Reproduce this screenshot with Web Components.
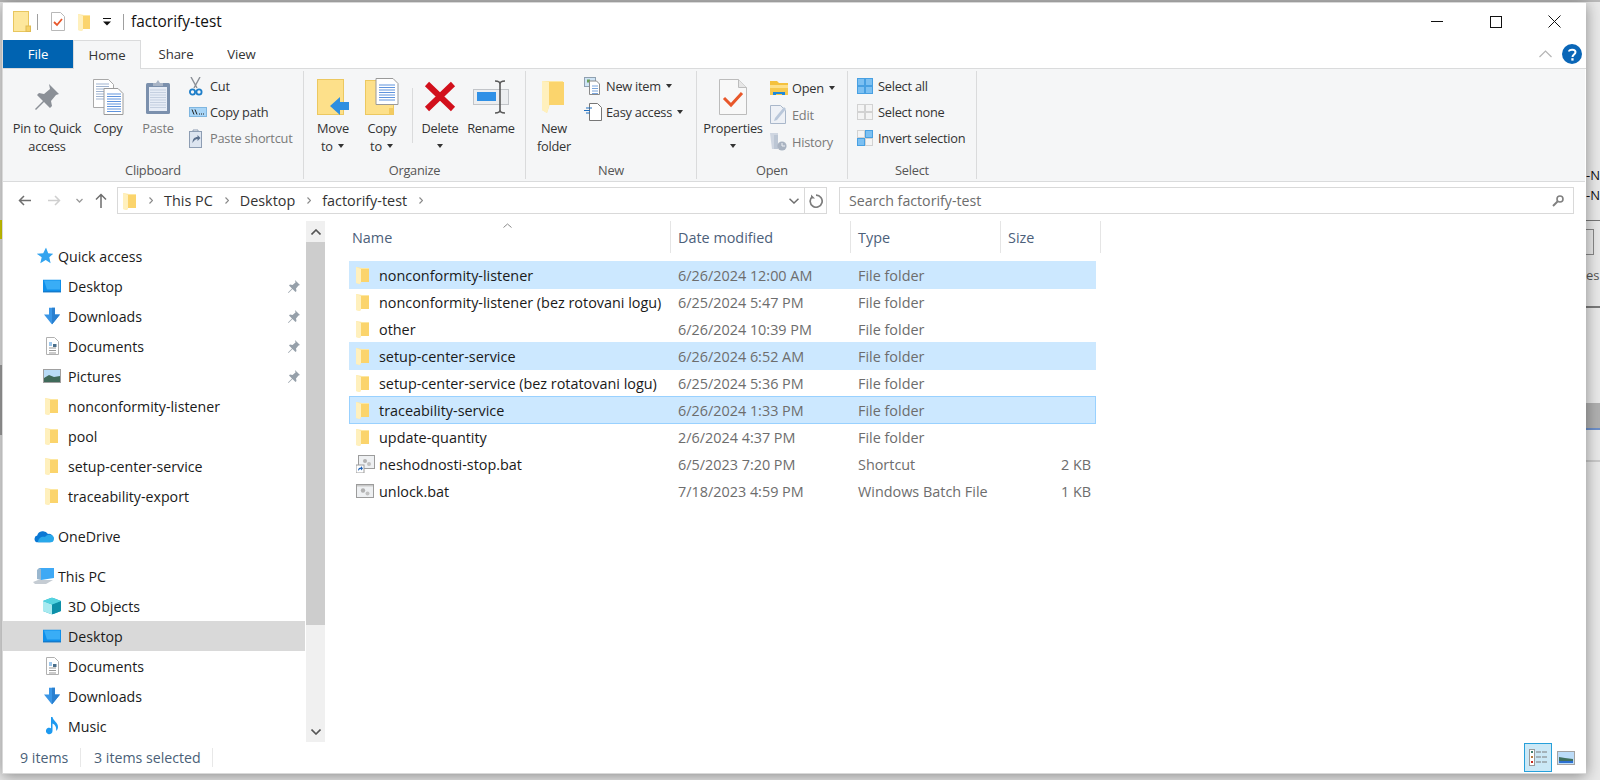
<!DOCTYPE html>
<html lang="en">
<head>
<meta charset="utf-8">
<title>factorify-test</title>
<style>
  html, body { margin: 0; height: 100%; overflow: hidden; }
  body { font: 14.4px "Open Sans", "Noto Sans", sans-serif; color: #1a1a1a; }
</style>
</head>
<body>
<desktop-bg>
  <explorer-window>
    <title-bar slot="top"></title-bar>
    <ribbon-tabs slot="top"></ribbon-tabs>
    <ribbon-bar slot="top">
      <ribbon-group label="Clipboard" width="300">
        <ribbon-button icon="pin" width="78" style="margin-left:5px">Pin to Quick<br>access</ribbon-button>
        <ribbon-button icon="copy" width="44">Copy</ribbon-button>
        <ribbon-button icon="paste" width="56" disabled>Paste</ribbon-button>
        <ribbon-stack style="margin-left:3px">
          <ribbon-small icon="cut" box="21">Cut</ribbon-small>
          <ribbon-small icon="copypath" box="21">Copy path</ribbon-small>
          <ribbon-small icon="pasteshort" box="21" disabled>Paste shortcut</ribbon-small>
        </ribbon-stack>
      </ribbon-group>
      <ribbon-group label="Organize" width="221">
        <ribbon-button icon="moveto" width="52" style="margin-left:3px">Move<br>to <win-caret></win-caret></ribbon-button>
        <ribbon-button icon="copyto" width="46">Copy<br>to <win-caret></win-caret></ribbon-button>
        <ribbon-sep></ribbon-sep>
        <ribbon-button icon="delete" width="52">Delete<br><win-caret></win-caret></ribbon-button>
        <ribbon-button icon="rename" width="50">Rename</ribbon-button>
      </ribbon-group>
      <ribbon-group label="New" width="170">
        <ribbon-button icon="newfolder" width="50" style="margin-left:3px">New<br>folder</ribbon-button>
        <ribbon-stack style="margin-left:5px">
          <ribbon-small icon="newitem" box="22">New item <win-caret></win-caret></ribbon-small>
          <ribbon-small icon="easy" box="22">Easy access <win-caret></win-caret></ribbon-small>
        </ribbon-stack>
      </ribbon-group>
      <ribbon-group label="Open" width="150">
        <ribbon-button icon="props" width="66" style="margin-left:3px">Properties<br><win-caret></win-caret></ribbon-button>
        <ribbon-stack pitch="27" style="margin-left:4px">
          <ribbon-small icon="open" box="22">Open <win-caret></win-caret></ribbon-small>
          <ribbon-small icon="edit" box="22" disabled>Edit</ribbon-small>
          <ribbon-small icon="history" box="22" disabled>History</ribbon-small>
        </ribbon-stack>
      </ribbon-group>
      <ribbon-group label="Select" width="128">
        <ribbon-stack style="margin-left:9px">
          <ribbon-small icon="selall" box="21">Select all</ribbon-small>
          <ribbon-small icon="selnone" box="21">Select none</ribbon-small>
          <ribbon-small icon="selinv" box="21">Invert selection</ribbon-small>
        </ribbon-stack>
      </ribbon-group>
    </ribbon-bar>
    <address-row slot="top"></address-row>

    <nav-pane slot="nav">
      <nav-item icon="star" level="0">Quick access</nav-item>
      <nav-item icon="desktop" pinned>Desktop</nav-item>
      <nav-item icon="downloads" pinned>Downloads</nav-item>
      <nav-item icon="documents" pinned>Documents</nav-item>
      <nav-item icon="pictures" pinned>Pictures</nav-item>
      <nav-item icon="folder">nonconformity-listener</nav-item>
      <nav-item icon="folder">pool</nav-item>
      <nav-item icon="folder">setup-center-service</nav-item>
      <nav-item icon="folder">traceability-export</nav-item>
      <nav-item icon="onedrive" level="0" gap>OneDrive</nav-item>
      <nav-item icon="thispc" level="0" gap>This PC</nav-item>
      <nav-item icon="cube">3D Objects</nav-item>
      <nav-item icon="desktop" selected>Desktop</nav-item>
      <nav-item icon="documents">Documents</nav-item>
      <nav-item icon="downloads">Downloads</nav-item>
      <nav-item icon="music">Music</nav-item>
    </nav-pane>

    <file-list slot="list">
      <file-row icon="folder" selected date="6/26/2024 12:00 AM" type="File folder">nonconformity-listener</file-row>
      <file-row icon="folder" date="6/25/2024 5:47 PM" type="File folder">nonconformity-listener (bez rotovani logu)</file-row>
      <file-row icon="folder" date="6/26/2024 10:39 PM" type="File folder">other</file-row>
      <file-row icon="folder" selected date="6/26/2024 6:52 AM" type="File folder">setup-center-service</file-row>
      <file-row icon="folder" date="6/25/2024 5:36 PM" type="File folder">setup-center-service (bez rotatovani logu)</file-row>
      <file-row icon="folder" selected focused date="6/26/2024 1:33 PM" type="File folder">traceability-service</file-row>
      <file-row icon="folder" date="2/6/2024 4:37 PM" type="File folder">update-quantity</file-row>
      <file-row icon="shortcut" date="6/5/2023 7:20 PM" type="Shortcut" size="2 KB">neshodnosti-stop.bat</file-row>
      <file-row icon="bat" date="7/18/2023 4:59 PM" type="Windows Batch File" size="1 KB">unlock.bat</file-row>
    </file-list>

    <status-bar slot="bottom"></status-bar>
  </explorer-window>
</desktop-bg>

<script>
// every icon: [width, height, svg body]
const folderBody = `<path d="M1 1l6 1 7 0v14H6l-1 2-4-1z" fill="#fde7a0"/><path d="M6 3h8v13H6z" fill="#fbd46c"/><path d="M1 1l5 2v13l-1 2-4-1z" fill="#fff0bd"/>`
const docLines = (x, y, n, w, c) => Array.from({ length: n }, (_, i) => `<path d="M${x} ${y + i * 2.5}h${w}" stroke="${c}" stroke-width="1"/>`).join('')
const ICONS = {
  folder: [14, 18, folderBody],
  titlefolder: [18, 21, `<rect x=".5" y=".5" width="15" height="20" fill="#fde79c" stroke="#e8c65e"/><rect x="13" y="15" width="4.5" height="5.5" fill="#f6d26a" stroke="#e0bb52"/>`],
  titlecheck: [14, 19, `<path d="M.5.5h9l4 4v14H.5z" fill="#fff" stroke="#b8b8b8"/><path d="M3 10l3 3 5-6" fill="none" stroke="#e8572a" stroke-width="1.8"/>`],
  titlefolder2: [13, 18, folderBody],
  qdrop: [8, 8, `<path d="M0 .5h8" stroke="#111"/><path d="M0 3.5h8L4 7.5z" fill="#111"/>`],
  min: [12, 1, `<rect width="12" height="1" fill="#111"/>`],
  max: [12, 12, `<rect x=".5" y=".5" width="11" height="11" fill="none" stroke="#111"/>`],
  close: [13, 13, `<path d="M.5.5l12 12M12.5.5l-12 12" stroke="#111" fill="none"/>`],
  collapse: [13, 8, `<path d="M.5 7L6.5 1l6 6" fill="none" stroke="#b5b5b5" stroke-width="1.2"/>`],
  help: [20, 20, `<circle cx="10" cy="10" r="10" fill="#0a66b7"/><path d="M7 7.5C7 5 13.5 5 13.5 8c0 2.5-3 2.4-3 5" fill="none" stroke="#fff" stroke-width="2"/><rect x="9.3" y="14.2" width="2.3" height="2.4" fill="#fff"/>`],
  pin: [26, 28, `<path d="M15 1l10 10-3 1-5 6 1 5-2 2-6-6-8 8-1-1 8-8-6-6 2-2 5 1 6-5z" fill="#8b9097"/>`],
  pinsmall: [13, 13, `<path d="M8 0l5 5-1.5.6-2.5 3 .5 2.4-1 1-3-3-4 4-.5-.5 4-4-3-3 1-1 2.5.5 3-2.5z" fill="#96a0aa"/>`],
  copy: [31, 36, `<path d="M.5.5h15l5 5v23H.5z" fill="#fff" stroke="#a9a9a9"/>${docLines(3, 5, 7, 13, '#9fb3d0')}<path d="M11 9.5h14l5 5v21H11z" fill="#fff" stroke="#9a9a9a"/>${docLines(14, 15, 8, 14, '#5f93dd')}`],
  paste: [26, 36, `<rect x="1" y="4" width="24" height="31" rx="1.5" fill="#7b90ad"/><rect x="4" y="8" width="18" height="24" fill="#e6ecf6"/>${docLines(5, 11, 8, 16, '#c4cfe0')}<path d="M8 7V4h3l2-3 2 3h3v3z" fill="#a8b4c6"/>`],
  cut: [14, 19, `<path d="M2 0l6 11M11 0L5 11" stroke="#8a8f96" stroke-width="1.4" fill="none"/><circle cx="3.5" cy="15" r="2.6" fill="none" stroke="#1f7fc9" stroke-width="1.8"/><circle cx="10" cy="15" r="2.6" fill="none" stroke="#1f7fc9" stroke-width="1.8"/>`],
  copypath: [18, 10, `<rect x=".5" y=".5" width="17" height="9" fill="#a8d5f7" stroke="#7fb6e0"/><path d="M3 2.5l2 5M6 2.5l2 5" stroke="#222" fill="none"/><path d="M10 7h5" stroke="#222" stroke-dasharray="1 1"/>`],
  pasteshort: [13, 19, `<rect x=".5" y="2.5" width="12" height="16" fill="#dde5f0" stroke="#8d9db3"/><path d="M4 2.5V1h5v1.5" fill="none" stroke="#8d9db3"/><path d="M4 15c0-4 2-6 5-6V7l3 3-3 3v-2c-2 0-3 1-5 4z" fill="#5a6f8c" transform="translate(-.5 -1)"/>`],
  moveto: [33, 36, `<rect x=".5" y=".5" width="26" height="35" fill="#fde08a" stroke="#ecc860"/><path d="M13 27l10-9v5h9v8h-9v5z" fill="#2f8fe0"/>`],
  copyto: [34, 37, `<rect x=".5" y="2.5" width="28" height="34" fill="#fde08a" stroke="#ecc860"/><path d="M24 30h4.5v6.5H24z" fill="#f3cb62"/><path d="M11 .5h17l5 5v21H11z" fill="#fff" stroke="#9a9a9a"/>${docLines(14, 7, 7, 16, '#5f93dd')}`],
  delete: [32, 31, `<path d="M3 3l26 25M29 3L3 28" stroke="#d2101c" stroke-width="6" fill="none"/>`],
  rename: [36, 34, `<rect x=".5" y="9.5" width="35" height="15" fill="#eceef0" stroke="#c2c5c9"/><rect x="4" y="12" width="19" height="9" fill="#2f90e6"/><path d="M22 1c3 0 5 1 5 3v26c0 2-2 3-5 3M32 1c-3 0-5 1-5 3v26c0 2 2 3 5 3" fill="none" stroke="#5a5a5a" stroke-width="1.6"/>`],
  newfolder: [24, 34, `<path d="M0 1h21v23l-13 0-3 9-5-3z" fill="#fde7a0"/><path d="M7 2h15v23H7z" fill="#fbd46c"/><path d="M0 1l7 1v24l-2 7-5-3z" fill="#fff0bd"/>`],
  newitem: [18, 18, `<rect x=".5" y=".5" width="11" height="9" fill="#cfe4f5" stroke="#8fa0b0"/><rect x="3" y="2.5" width="3" height="3" fill="#6aa058"/><path d="M5.5 4h7l3 3v10.5h-10z" fill="#fff" stroke="#8a8a8a"/>${docLines(8, 9, 4, 6, '#7aa5dc')}`],
  easy: [18, 18, `<path d="M5.5.5h8l4 4v13h-12z" fill="#fff" stroke="#777"/><path d="M2 5h6M0 7.5h6M2 10h4" stroke="#1f6fc0" fill="none" stroke-width="1.2"/>`],
  props: [28, 36, `<path d="M.5.5h19l8 8v27H.5z" fill="#f8f8f8" stroke="#bcbcbc"/><path d="M19.5.5v8h8" fill="#e6e6e6" stroke="#bcbcbc"/><path d="M5 19l7 7 11-12" fill="none" stroke="#e8572a" stroke-width="3"/>`],
  open: [18, 16, `<path d="M0 1h7l2 2h9v12H0z" fill="#f4c13e"/><path d="M0 5h18v3H0z" fill="#fde08a"/><path d="M0 8h18v7H0z" fill="#f6c94f"/><path d="M3 15v-3h12v3h-3v-1H6v1z" fill="#1e88d9"/>`],
  edit: [16, 19, `<path d="M.5.5h10l5 5v13H.5z" fill="#eef1f6" stroke="#a9b7ca"/><path d="M5 13L14 2l2 2-9 11-3 1z" fill="#b9c7da"/>`],
  history: [17, 19, `<path d="M0 1h8v16H2z" fill="#cfd6e1"/><path d="M4 3h4v14H4z" fill="#bcc6d4"/><circle cx="12" cy="14" r="4.6" fill="#a9b3c1"/><path d="M12 11v3h3" stroke="#eef1f5" fill="none"/>`],
  selall: [16, 16, `<g fill="#7cc0f2" stroke="#48a0e2"><rect x=".5" y=".5" width="7" height="7"/><rect x="8.5" y=".5" width="7" height="7"/><rect x=".5" y="8.5" width="7" height="7"/><rect x="8.5" y="8.5" width="7" height="7"/></g>`],
  selnone: [16, 16, `<g fill="#f4f4f4" stroke="#d2d2d2"><rect x=".5" y=".5" width="7" height="7"/><rect x="8.5" y=".5" width="7" height="7"/><rect x=".5" y="8.5" width="7" height="7"/><rect x="8.5" y="8.5" width="7" height="7"/></g>`],
  selinv: [16, 16, `<g fill="#f4f4f4" stroke="#d2d2d2"><rect x=".5" y=".5" width="7" height="7"/><rect x="8.5" y="8.5" width="7" height="7"/></g><g fill="#7cc0f2" stroke="#48a0e2"><rect x="8.5" y=".5" width="7" height="7"/><rect x=".5" y="8.5" width="7" height="7"/></g>`],
  back: [13, 11, `<path d="M13 5.5H1.5M6 1L1.5 5.5 6 10" fill="none" stroke="#6e6e6e" stroke-width="1.5"/>`],
  forward: [13, 11, `<path d="M0 5.5h11.5M7 1l4.5 4.5L7 10" fill="none" stroke="#cfcfcf" stroke-width="1.5"/>`],
  recent: [7, 5, `<path d="M.5 1L3.5 4l3-3" fill="none" stroke="#9a9a9a" stroke-width="1.3"/>`],
  up: [12, 15, `<path d="M6 15V1.5M1 6.5l5-5 5 5" fill="none" stroke="#6e6e6e" stroke-width="1.5"/>`],
  crumb: [4, 7, `<path d="M.5.5l3 3-3 3" fill="none" stroke="#8a8a8a" stroke-width="1.2"/>`],
  addrdrop: [10, 6, `<path d="M.5.8L5 5l4.5-4.2" fill="none" stroke="#6e6e6e" stroke-width="1.5"/>`],
  refresh: [14, 14, `<path d="M3.3 2.6A6 6 0 1 0 7 1.2" fill="none" stroke="#7d7d7d" stroke-width="1.7"/><path d="M2 .5v4h4z" fill="#7d7d7d"/>`],
  search: [12, 12, `<circle cx="8" cy="4" r="3" fill="none" stroke="#808080" stroke-width="1.6"/><path d="M5.5 6.5L1 11" stroke="#808080" stroke-width="2"/>`],
  star: [18, 17, `<path d="M11 0l2.2 5.8 5 .4-3.9 3.6 1.3 6-4.9-3.2-5.4 3.2 1.4-6-5-3.6 6.5-.4z" fill="#33a4ef"/>`],
  desktop: [18, 13, `<rect width="18" height="13" fill="#0f8fea"/><path d="M1 1h16v9H4z" fill="#39adf6"/><rect y="12" width="18" height="1" fill="#1868b0"/>`],
  downloads: [16, 17, `<path d="M5 0h6v7h5l-8 10L0 7h5z" fill="#3a96e6"/><path d="M8 0h3v7h5l-8 10z" fill="#2a80d0"/>`],
  documents: [13, 18, `<path d="M.5.5h8l4 4v13H.5z" fill="#fff" stroke="#b0b0b0"/><path d="M3 6h3M3 8h3" stroke="#3f8fd8"/>${docLines(3, 11, 3, 7, '#999')}<rect x="7" y="7" width="3.5" height="3" fill="#4a6e8a"/>`],
  pictures: [18, 14, `<rect x=".5" y=".5" width="17" height="13" fill="#b9dcf7" stroke="#a0a0a0"/><path d="M1 9l5-3 5 2 6-1v6H1z" fill="#3f6a5a"/>`],
  onedrive: [20, 13, `<path d="M4 13a3.5 3.5 0 0 1-.8-6.9A6 6 0 0 1 14 4.5 4.3 4.3 0 0 1 16 13z" fill="#0a78d4"/><path d="M4 13h12a3.8 3.8 0 0 0 1-7.5c-3-1-5 .5-6 2-3-1-7 1-7 5.500z" fill="#28a8ea"/>`],
  thispc: [22, 16, `<path d="M6 0h15v10l-13 2z" fill="#3fa9f5"/><path d="M6 0l-2 2v9l4 1V1z" fill="#9ab7cf"/><path d="M0 14l5-2h15l-7 4H2z" fill="#c5ccd3"/>`],
  cube: [18, 17, `<path d="M9 0l9 3.500v10L9 17 0 13.500v-10z" fill="#1fb5c9"/><path d="M0 3.500L9 7v10L0 13.500z" fill="#a8eaf0"/><path d="M9 7l9-3.500v10L9 17z" fill="#0d8fa8"/><path d="M9 0l9 3.500L9 7 0 3.500z" fill="#55d3e0"/>`],
  music: [13, 18, `<path d="M5 0h1.500c.5 4 5.500 5 5.500 10 0 2-1 3-2 4 .5-3 0-6-3.500-7.500V14a3.300 3.300 0 1 1-1.500-2.800z" fill="#1e9af0"/>`],
  shortcut: [19, 18, `<rect x="2.500" y=".5" width="16" height="13" fill="#eef0f2" stroke="#9c9c9c"/><circle cx="9" cy="6" r="2" fill="#b0b0b0"/><circle cx="13" cy="9" r="2" fill="#c0c0c0"/><rect y="10" width="8" height="8" fill="#fff" stroke="#9c9c9c"/><path d="M2 16c0-2.500 1-3.500 3-3.500V11l2 2.500L5 15.500V14c-1.500 0-2 .7-3 2z" fill="#1b5fb5"/>`],
  bat: [18, 14, `<rect x=".5" y=".5" width="17" height="13" fill="#eef0f2" stroke="#9c9c9c"/><rect x="1" y="1" width="16" height="1.500" fill="#c9c9c9"/><circle cx="7" cy="6.500" r="2.200" fill="#b0b0b0"/><circle cx="11.500" cy="9.500" r="2" fill="#c0c0c0"/>`],
  viewdetails: [18, 17, `<rect x=".5" y=".5" width="5" height="16" fill="#fff" stroke="#9a9a9a"/><rect x="2" y="2" width="2" height="2" fill="#3f7f70"/><rect x="2" y="7" width="2" height="2" fill="#b37a3f"/><rect x="2" y="12" width="2" height="2" fill="#c8281e"/><path d="M7 3h5M13 3h5M7 8h5M13 8h5M7 13h5M13 13h5" stroke="#7d7d7d"/>`],
  viewthumbs: [18, 14, `<rect x=".5" y=".5" width="17" height="13" fill="#bcdcf8" stroke="#a3a3a3"/><path d="M2 6l6 1 8 1v4H2z" fill="#40705e"/><rect x="2" y="10" width="14" height="2" fill="#2d6fd0"/>`]
}

class WinIcon extends HTMLElement {
  constructor () {
    super()
    this.shadow = this.attachShadow({ mode: 'open' })
  }
  connectedCallback () {
    const [w, h, body] = ICONS[this.getAttribute('name')]
    this.shadow.innerHTML = `
      <style>:host { display: inline-flex; flex: none; line-height: 0; } svg { display: block; }</style>
      <svg width="${w}" height="${h}" viewBox="0 0 ${w} ${h}">${body}</svg>`
  }
}

class WinCaret extends HTMLElement {
  constructor () {
    super()
    this.attachShadow({ mode: 'open' }).innerHTML = `
      <style>
        :host { display: inline-block; width: 0; height: 0; margin: 0 1px 3px 2px; vertical-align: middle;
          border: 3.5px solid transparent; border-top: 4px solid #333; border-bottom: 0; }
      </style>`
  }
}

class DesktopBg extends HTMLElement {
  constructor () {
    super()
    this.attachShadow({ mode: 'open' }).innerHTML = `
      <style>
        :host { display: block; position: relative; width: 1600px; height: 780px; padding: 2px 14px 6px 2px;
          box-sizing: border-box; background: #e9e9e9; overflow: hidden; }
        .bit { position: absolute; }
        .t { position: absolute; left: 1586px; font-size: 13px; line-height: 16px; color: #111; white-space: nowrap; }
      </style>
      <div class="bit" style="left:0;top:0;width:1600px;height:2px;background:#b9b9b9"></div>
      <div class="bit" style="left:0;top:220px;width:2px;height:19px;background:#ddd800"></div>
      <div class="bit" style="left:0;top:365px;width:2px;height:70px;background:#a5a5a5"></div>
      <div class="bit" style="left:1586px;top:220px;width:14px;height:1px;background:#777"></div>
      <div class="bit" style="left:1586px;top:229px;width:7px;height:24px;border:1px solid #888;border-left:0"></div>
      <div class="bit" style="left:1586px;top:306px;width:14px;height:2px;background:#7a7a7a"></div>
      <div class="bit" style="left:1586px;top:403px;width:14px;height:26px;background:#b0b0b0"></div>
      <div class="bit" style="left:1586px;top:428px;width:14px;height:2px;background:#6d8fc9"></div>
      <div class="bit" style="left:1586px;top:460px;width:14px;height:2px;background:#c9c9c9"></div>
      <div class="t" style="top:167px">-N</div>
      <div class="t" style="top:187px">-N</div>
      <div class="t" style="top:267px;color:#555">es</div>
      <slot></slot>`
  }
}

class ExplorerWindow extends HTMLElement {
  constructor () {
    super()
    this.attachShadow({ mode: 'open' }).innerHTML = `
      <style>
        :host { display: flex; flex-direction: column; position: relative; height: 100%; box-sizing: border-box;
          background: #fff; border: 1px solid #d9d9d9; border-right: 0; box-shadow: 0 2px 14px rgba(0,0,0,.42); }
        .main { flex: 1; min-height: 0; display: flex; }
      </style>
      <slot name="top"></slot>
      <div class="main">
        <slot name="nav"></slot>
        <slot name="list"></slot>
      </div>
      <slot name="bottom"></slot>`
  }
}

class TitleBar extends HTMLElement {
  constructor () {
    super()
    this.attachShadow({ mode: 'open' }).innerHTML = `
      <style>
        :host { display: flex; align-items: center; height: 37px; padding-left: 10px; }
        .sep { width: 1px; height: 16px; background: #9f9f9f; margin: 0 13px 0 6px; }
        .name { font-size: 15.4px; color: #111; }
        .ctl { margin-left: auto; display: flex; align-items: center; }
        .ctl span { width: 59px; display: flex; justify-content: center; align-items: center; height: 24px; }
      </style>
      <win-icon name="titlefolder"></win-icon>
      <span class="sep" style="margin-left:6px"></span>
      <win-icon name="titlecheck"></win-icon>
      <win-icon name="titlefolder2" style="margin-left:12px"></win-icon>
      <win-icon name="qdrop" style="margin-left:13px"></win-icon>
      <span class="sep" style="margin-left:12px;margin-right:7px"></span>
      <span class="name">factorify-test</span>
      <div class="ctl">
        <span><win-icon name="min"></win-icon></span>
        <span><win-icon name="max"></win-icon></span>
        <span style="margin-right:2px"><win-icon name="close"></win-icon></span>
      </div>`
  }
}

class RibbonTabs extends HTMLElement {
  constructor () {
    super()
    this.attachShadow({ mode: 'open' }).innerHTML = `
      <style>
        :host { display: flex; height: 28px; align-items: stretch; position: relative; border-bottom: 1px solid #dadbdc;
          font-size: 13.2px; letter-spacing: -.1px; color: #333; }
        div { display: flex; align-items: center; justify-content: center; box-sizing: border-box; }
        .file { width: 70px; background: #0063b1; color: #fff; }
        .home { width: 68px; background: #f5f6f7; border: 1px solid #dadbdc; border-bottom: 0; height: 29px; }
        .share { width: 70px; }
        .view { width: 61px; }
        .right { margin-left: auto; gap: 10px; padding-right: 4px; }
      </style>
      <div class="file">File</div>
      <div class="home">Home</div>
      <div class="share">Share</div>
      <div class="view">View</div>
      <div class="right"><win-icon name="collapse"></win-icon><win-icon name="help"></win-icon></div>`
  }
}

class RibbonBar extends HTMLElement {
  constructor () {
    super()
    this.attachShadow({ mode: 'open' }).innerHTML = `
      <style>
        :host { display: flex; height: 112px; background: #f5f6f7; border-bottom: 1px solid #dadbdc; margin-right: 1px;
          font-size: 12.8px; letter-spacing: -.25px; }
      </style>
      <slot></slot>`
  }
}

class RibbonGroup extends HTMLElement {
  constructor () {
    super()
    this.shadow = this.attachShadow({ mode: 'open' })
  }
  connectedCallback () {
    this.shadow.innerHTML = `
      <style>
        :host { display: flex; flex-direction: column; box-sizing: content-box; width: ${this.getAttribute('width')}px;
          border-right: 1px solid #dadbdc; margin: 2px 0; }
        .body { flex: 1; display: flex; align-items: flex-start; padding-top: 2px; }
        .label { height: 20px; text-align: center; color: #555; line-height: 23px; }
      </style>
      <div class="body"><slot></slot></div>
      <div class="label">${this.getAttribute('label')}</div>`
  }
}

class RibbonButton extends HTMLElement {
  constructor () {
    super()
    this.shadow = this.attachShadow({ mode: 'open' })
  }
  connectedCallback () {
    const color = this.hasAttribute('disabled') ? '#7a7a7a' : '#333'
    this.shadow.innerHTML = `
      <style>
        :host { display: flex; flex-direction: column; align-items: center; flex: none; width: ${this.getAttribute('width')}px;
          line-height: 17.5px; color: ${color}; text-align: center; white-space: nowrap; }
        .ico { height: 47px; display: flex; align-items: center; justify-content: center; }
      </style>
      <div class="ico"><win-icon name="${this.getAttribute('icon')}"></win-icon></div>
      <div><slot></slot></div>`
  }
}

class RibbonSep extends HTMLElement {
  constructor () {
    super()
    this.attachShadow({ mode: 'open' }).innerHTML = `
      <style>:host { display: block; flex: none; width: 1px; height: 55px; margin: 15px 1px 0 7px; background: #dadbdc; }</style>`
  }
}

class RibbonStack extends HTMLElement {
  constructor () {
    super()
    this.shadow = this.attachShadow({ mode: 'open' })
  }
  connectedCallback () {
    const pitch = this.getAttribute('pitch') || 26
    this.shadow.innerHTML = `
      <style>
        :host { display: grid; grid-auto-rows: ${pitch}px; flex: none; padding-top: ${pitch == 27 ? 1 : 0}px; }
      </style>
      <slot></slot>`
  }
}

class RibbonSmall extends HTMLElement {
  constructor () {
    super()
    this.shadow = this.attachShadow({ mode: 'open' })
  }
  connectedCallback () {
    const color = this.hasAttribute('disabled') ? '#7a7a7a' : '#333'
    this.shadow.innerHTML = `
      <style>
        :host { display: flex; align-items: center; color: ${color}; white-space: nowrap; }
        .ico { width: ${this.getAttribute('box')}px; flex: none; display: flex; }
      </style>
      <div class="ico"><win-icon name="${this.getAttribute('icon')}"></win-icon></div>
      <span><slot></slot></span>`
  }
}

class AddressRow extends HTMLElement {
  constructor () {
    super()
    this.attachShadow({ mode: 'open' }).innerHTML = `
      <style>
        :host { display: flex; align-items: center; height: 39px; box-sizing: border-box; padding: 5px 12px 7px 15px; font-size: 14.4px; color: #333; }
        .nav { display: flex; align-items: center; width: 99px; flex: none; }
        .box { display: flex; align-items: center; height: 27px; box-sizing: border-box; border: 1px solid #d9d9d9; }
        .addr { width: 710px; flex: none; padding-left: 4px; }
        .addr span { color: #333; }
        .addr win-icon[name=crumb] { margin: 0 11px 0 12px; }
        .end { margin-left: auto; display: flex; align-items: center; height: 100%; }
        .refresh { display: flex; align-items: center; justify-content: center; width: 21px; height: 100%; border-left: 1px solid #d9d9d9; }
        .search { flex: 1; margin-left: 12px; padding: 0 9px; color: #6d6d6d; justify-content: space-between; font-size: 14.2px; }
      </style>
      <div class="nav">
        <win-icon name="back"></win-icon>
        <win-icon name="forward" style="margin-left:17px"></win-icon>
        <win-icon name="recent" style="margin-left:15px"></win-icon>
        <win-icon name="up" style="margin-left:12px"></win-icon>
      </div>
      <div class="box addr">
        <win-icon name="folder"></win-icon>
        <win-icon name="crumb" style="margin-left:13px"></win-icon>
        <span>This PC</span><win-icon name="crumb"></win-icon>
        <span>Desktop</span><win-icon name="crumb"></win-icon>
        <span>factorify-test</span><win-icon name="crumb"></win-icon>
        <div class="end">
          <win-icon name="addrdrop" style="margin-right:5px"></win-icon>
          <div class="refresh"><win-icon name="refresh"></win-icon></div>
        </div>
      </div>
      <div class="box search"><span>Search factorify-test</span><win-icon name="search"></win-icon></div>`
  }
}

class NavPane extends HTMLElement {
  constructor () {
    super()
    this.attachShadow({ mode: 'open' }).innerHTML = `
      <style>
        :host { display: flex; flex: none; width: 322px; height: 100%; }
        .items { width: 302px; padding: 20px 1px 0 0; overflow: hidden; box-sizing: content-box; height: calc(100% - 20px); }
        .bar { width: 19px; display: flex; flex-direction: column; background: #f0f0f0; }
        .btn { height: 21px; display: flex; align-items: center; justify-content: center; flex: none; }
        .thumb { height: 383px; background: #cdcdcd; flex: none; }
        .fill { flex: 1; }
        svg { display: block; }
      </style>
      <div class="items"><slot></slot></div>
      <div class="bar">
        <div class="btn"><svg width="10" height="6"><path d="M.5 5.500L5 1l4.500 4.500" fill="none" stroke="#555" stroke-width="1.600"/></svg></div>
        <div class="thumb"></div>
        <div class="fill"></div>
        <div class="btn"><svg width="10" height="6"><path d="M.5.500L5 5l4.500-4.500" fill="none" stroke="#555" stroke-width="1.600"/></svg></div>
      </div>`
  }
}

class NavItem extends HTMLElement {
  constructor () {
    super()
    this.shadow = this.attachShadow({ mode: 'open' })
  }
  connectedCallback () {
    const top = this.getAttribute('level') === '0'
    const name = this.getAttribute('icon')
    const iconWidth = ICONS[name][0]
    const center = top ? 42 : (name === 'folder' ? 49 : 50)
    const pin = this.hasAttribute('pinned') ? '<win-icon name="pinsmall" class="pin"></win-icon>' : ''
    this.shadow.innerHTML = `
      <style>
        :host { display: flex; align-items: center; height: 30px; font-size: 14.2px; color: #1a1a1a; white-space: nowrap;
          margin-top: ${this.hasAttribute('gap') ? 10 : 0}px; background: ${this.hasAttribute('selected') ? '#d9d9d9' : 'none'}; }
        .slot { width: ${top ? 55 : 65}px; flex: none; position: relative; height: 100%; }
        win-icon.i { position: absolute; top: 50%; left: ${center - iconWidth / 2 - 1}px; transform: translateY(-50%); }
        .pin { margin-left: auto; margin-right: 5px; }
      </style>
      <div class="slot"><win-icon class="i" name="${name}"></win-icon></div>
      <slot></slot>${pin}`
  }
}

class FileList extends HTMLElement {
  constructor () {
    super()
    this.attachShadow({ mode: 'open' }).innerHTML = `
      <style>
        :host { display: block; flex: 1; padding-left: 24px; position: relative; }
        .head { display: flex; height: 32px; font-size: 14.4px; color: #4c607a; margin-bottom: 8px; }
        .head div { box-sizing: border-box; display: flex; align-items: center; height: 100%; border-right: 1px solid #e5e5e5; }
        .arrow { position: absolute; left: 176px; top: 0; }
      </style>
      <div class="head">
        <div style="width:322px;padding-left:3px">Name</div>
        <div style="width:180px;padding-left:7px">Date modified</div>
        <div style="width:150px;padding-left:7px">Type</div>
        <div style="width:100px;padding-left:7px">Size</div>
      </div>
      <svg class="arrow" width="9" height="6" style="top:2px;left:178px"><path d="M.5 4.500L4.500 1l4 3.500" fill="none" stroke="#8a8a8a"/></svg>
      <slot></slot>`
  }
}

class FileRow extends HTMLElement {
  constructor () {
    super()
    this.shadow = this.attachShadow({ mode: 'open' })
  }
  connectedCallback () {
    const selected = this.hasAttribute('selected')
    const border = this.hasAttribute('focused') ? '#99d1ff' : (selected ? '#cce8ff' : 'transparent')
    const icon = this.getAttribute('icon')
    this.shadow.innerHTML = `
      <style>
        :host { display: grid; grid-template-columns: 329px 179px 150px 89px; align-items: center; width: 747px; height: 28px;
          margin-bottom: -1px; box-sizing: border-box; font-size: 14.4px; color: #6d6d6d; white-space: nowrap;
          background: ${selected ? '#cce8ff' : 'transparent'}; border: 1px solid ${border}; position: relative; }
        :host > * { min-width: 0; }
        .name { display: flex; align-items: center; color: #1a1a1a; margin-left: -1px; }
        .ico { width: 30px; padding-left: ${icon === 'folder' ? 6 : 7}px; box-sizing: border-box; flex: none; display: flex; }
        .date { margin-left: -1px; }
        .size { text-align: right; padding-right: 6px; }
      </style>
      <div class="name"><div class="ico"><win-icon name="${icon}"></win-icon></div><slot></slot></div>
      <div class="date">${this.getAttribute('date')}</div>
      <div>${this.getAttribute('type')}</div>
      <div class="size">${this.getAttribute('size') || ''}</div>`
  }
}

class StatusBar extends HTMLElement {
  constructor () {
    super()
    this.attachShadow({ mode: 'open' }).innerHTML = `
      <style>
        :host { display: flex; align-items: center; height: 31px; flex: none; padding-left: 17px; font-size: 14.2px; color: #4a5f78; }
        .sep { width: 1px; height: 19px; background: #e8e8e8; }
        .view { margin-left: auto; display: flex; align-items: center; margin-right: 11px; }
        .active { width: 28px; height: 29px; box-sizing: border-box; background: #cbe8f6; border: 1px solid #26a0da; display: flex; align-items: center; justify-content: center; }
      </style>
      <span style="width:60px">9 items</span><span class="sep"></span>
      <span style="width:118px;padding-left:13px">3 items selected</span><span class="sep"></span>
      <div class="view">
        <div class="active"><win-icon name="viewdetails"></win-icon></div>
        <win-icon name="viewthumbs" style="margin-left:5px"></win-icon>
      </div>`
  }
}

customElements.define('win-icon', WinIcon)
customElements.define('win-caret', WinCaret)
customElements.define('desktop-bg', DesktopBg)
customElements.define('explorer-window', ExplorerWindow)
customElements.define('title-bar', TitleBar)
customElements.define('ribbon-tabs', RibbonTabs)
customElements.define('ribbon-bar', RibbonBar)
customElements.define('ribbon-group', RibbonGroup)
customElements.define('ribbon-button', RibbonButton)
customElements.define('ribbon-sep', RibbonSep)
customElements.define('ribbon-stack', RibbonStack)
customElements.define('ribbon-small', RibbonSmall)
customElements.define('address-row', AddressRow)
customElements.define('nav-pane', NavPane)
customElements.define('nav-item', NavItem)
customElements.define('file-list', FileList)
customElements.define('file-row', FileRow)
customElements.define('status-bar', StatusBar)
</script>
</body>
</html>
